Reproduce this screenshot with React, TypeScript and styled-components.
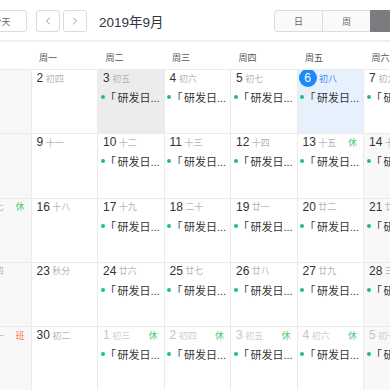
import React from 'react';
import styled, { createGlobalStyle } from 'styled-components';
import { ChevronLeft, ChevronRight } from 'lucide-react';

interface Day {
	day: number;
	lunar: string;
	other?: boolean;
	today?: boolean;
	selected?: boolean;
	plainBg?: boolean;
	mark?: '休' | '班';
	event?: boolean;
}

const weekNames = ['周日', '周一', '周二', '周三', '周四', '周五', '周六'];

const weeks: Day[][] = [
	[
		{ day: 1, lunar: '初三' },
		{ day: 2, lunar: '初四' },
		{ day: 3, lunar: '初五', selected: true, event: true },
		{ day: 4, lunar: '初六', event: true },
		{ day: 5, lunar: '初七', event: true },
		{ day: 6, lunar: '初八', today: true, event: true },
		{ day: 7, lunar: '初九', plainBg: true, event: true },
	],
	[
		{ day: 8, lunar: '初十' },
		{ day: 9, lunar: '十一' },
		{ day: 10, lunar: '十二', event: true },
		{ day: 11, lunar: '十三', event: true },
		{ day: 12, lunar: '十四', event: true },
		{ day: 13, lunar: '十五', mark: '休', event: true },
		{ day: 14, lunar: '十六', mark: '休', event: true },
	],
	[
		{ day: 15, lunar: '十七', mark: '休' },
		{ day: 16, lunar: '十八' },
		{ day: 17, lunar: '十九', event: true },
		{ day: 18, lunar: '二十', event: true },
		{ day: 19, lunar: '廿一', event: true },
		{ day: 20, lunar: '廿二', event: true },
		{ day: 21, lunar: '廿三', event: true },
	],
	[
		{ day: 22, lunar: '廿四' },
		{ day: 23, lunar: '秋分' },
		{ day: 24, lunar: '廿六', event: true },
		{ day: 25, lunar: '廿七', event: true },
		{ day: 26, lunar: '廿八', event: true },
		{ day: 27, lunar: '廿九', event: true },
		{ day: 28, lunar: '三十', event: true },
	],
	[
		{ day: 29, lunar: '初一', mark: '班' },
		{ day: 30, lunar: '初二' },
		{ day: 1, lunar: '初三', other: true, mark: '休', event: true },
		{ day: 2, lunar: '初四', other: true, mark: '休', event: true },
		{ day: 3, lunar: '初五', other: true, mark: '休', event: true },
		{ day: 4, lunar: '初六', other: true, mark: '休', event: true },
		{ day: 5, lunar: '初七', other: true, mark: '休', event: true },
	],
];

const App = () => {
	return (
		<>
			<GlobalStyle />
			<Calendar>
				<Toolbar>
					<TodayButton>今天</TodayButton>
					<NavButton>
						<ChevronLeft size={12} strokeWidth={1.5} />
					</NavButton>
					<NavButton>
						<ChevronRight size={12} strokeWidth={1.5} />
					</NavButton>
					<Title>2019年9月</Title>
					<ViewGroup>
						<ViewButton>日</ViewButton>
						<ViewButton>周</ViewButton>
						<ViewButton $active>月</ViewButton>
					</ViewGroup>
				</Toolbar>
				<HeadRow>
					{weekNames.map((name) => (
						<HeadCell key={name}>{name}</HeadCell>
					))}
				</HeadRow>
				<Body>
					{weeks.map((week, wi) =>
						week.map((d, di) => {
							const weekend = di === 0 || di === 6;
							let bg = '#fff';
							if (weekend && !d.plainBg) bg = '#f8f8f8';
							if (d.selected) bg = '#ececec';
							if (d.today) bg = '#e6f1fd';
							return (
								<Cell key={`${wi}-${di}`} $bg={bg}>
									<CellHead>
										<DayNum $today={d.today} $muted={d.other}>
											{d.day}
										</DayNum>
										<Lunar $today={d.today} $muted={d.other}>
											{d.lunar}
										</Lunar>
										{d.mark && <Mark $work={d.mark === '班'}>{d.mark}</Mark>}
									</CellHead>
									{d.event && (
										<Event>
											<Dot />
											<EventText>
												<Bracket>「</Bracket>研发日...
											</EventText>
										</Event>
									)}
								</Cell>
							);
						})
					)}
				</Body>
			</Calendar>
		</>
	);
};

const GlobalStyle = createGlobalStyle`
	html, body {
		margin: 0;
		padding: 0;
		background: #fff;
		overflow: hidden;
	}
	body {
		font-family: 'Liberation Sans', 'Noto Sans CJK SC', sans-serif;
		color: #333;
	}
`;

const Calendar = styled.div`
	width: 465.5px;
	margin-left: -35px;
`;

const Toolbar = styled.div`
	display: flex;
	align-items: center;
	padding: 10px 11.5px 8px 11px;
	border-bottom: 2px solid #efefef;
`;

const BaseButton = styled.div`
	display: flex;
	align-items: center;
	justify-content: center;
	box-sizing: border-box;
	height: 22px;
	border: 1px solid #dcdcdc;
	border-radius: 3px;
	background: #fff;
	color: #666;
	font-size: 9px;
`;

const TodayButton = styled(BaseButton)`
	width: 51px;
`;

const NavButton = styled(BaseButton)`
	width: 24px;
	margin-left: 9px;
	color: #777;

	& + & {
		margin-left: 3px;
	}
`;

const Title = styled.div`
	margin-left: 12px;
	font-size: 13.5px;
	color: #2f3440;
`;

const ViewGroup = styled.div`
	display: flex;
	margin-left: auto;
`;

const ViewButton = styled(BaseButton)<{ $active?: boolean }>`
	width: 49px;
	border-radius: 0;
	margin-left: -1px;
	background: ${(p) => (p.$active ? '#7a7c80' : '#fafafa')};
	border-color: ${(p) => (p.$active ? '#7a7c80' : '#dcdcdc')};
	color: ${(p) => (p.$active ? '#fff' : '#666')};

	&:first-child {
		border-radius: 3px 0 0 3px;
		margin-left: 0;
	}
	&:last-child {
		border-radius: 0 3px 3px 0;
	}
`;

const HeadRow = styled.div`
	display: grid;
	grid-template-columns: repeat(7, 66.5px);
	border-bottom: 1px solid #ebebeb;
`;

const HeadCell = styled.div`
	display: flex;
	align-items: center;
	box-sizing: border-box;
	height: 27px;
	padding: 3px 0 0 7.5px;
	font-size: 9px;
	color: #555;
`;

const Body = styled.div`
	display: grid;
	grid-template-columns: repeat(7, 66.5px);
	grid-auto-rows: 64.3px;
`;

const Cell = styled.div<{ $bg: string }>`
	box-sizing: border-box;
	border-right: 1px solid #ebebeb;
	border-bottom: 1px solid #ebebeb;
	background: ${(p) => p.$bg};
	overflow: hidden;
`;

const CellHead = styled.div`
	display: flex;
	align-items: center;
	height: 16px;
	padding: 0 6px 0 5px;
`;

const DayNum = styled.span<{ $today?: boolean; $muted?: boolean }>`
	display: inline-flex;
	align-items: center;
	justify-content: center;
	font-size: 12px;
	color: ${(p) => (p.$muted ? '#c4c4c4' : '#333')};
	${(p) =>
		p.$today &&
		`
		width: 18px;
		height: 18px;
		margin-left: -4px;
		border-radius: 50%;
		background: #1e88f5;
		color: #fff;
	`}
`;

const Lunar = styled.span<{ $today?: boolean; $muted?: boolean }>`
	margin-left: 2.5px;
	font-size: 9px;
	color: ${(p) => (p.$today ? '#3a8ef0' : p.$muted ? '#cfcfcf' : '#b5b5b5')};
`;

const Mark = styled.span<{ $work?: boolean }>`
	margin-left: auto;
	font-size: 9px;
	color: ${(p) => (p.$work ? '#ff7a45' : '#52c87a')};
`;

const Event = styled.div`
	display: flex;
	align-items: center;
	height: 14px;
	margin-top: 4px;
	padding-left: 2.5px;
`;

const Dot = styled.span`
	width: 4px;
	height: 4px;
	border-radius: 50%;
	background: #19be8a;
	flex-shrink: 0;
`;

const EventText = styled.span`
	margin-left: 0.5px;
	font-size: 11px;
	color: #333;
	white-space: nowrap;
`;

const Bracket = styled.span`
	margin-right: 1.5px;
`;

export default App;
